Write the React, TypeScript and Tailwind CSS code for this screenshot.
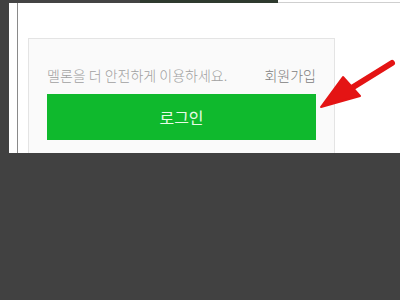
export default function App() {
  return (
    <div
      className="relative flex h-[300px] w-[400px] flex-col overflow-hidden bg-[#414141]"
      style={{ fontFamily: '"Noto Sans CJK KR", "Noto Sans", sans-serif' }}
    >
      <div className="ml-[9px] flex h-[153px] flex-col bg-white">
        {/* top strip from the page behind */}
        <div className="flex h-[3px] shrink-0">
          <div className="w-[131px] bg-[#444444]" />
          <div className="w-[138px] bg-[#2e3a2e]" />
          <div className="flex-1 border-b border-[#cfcfcf] bg-white" />
        </div>
        <div className="flex flex-1">
          <div className="w-[8px] shrink-0" />
          <div className="w-px shrink-0 bg-[#8a8a8a]" />
          <div className="flex flex-1 flex-col pl-[10px] pt-[35px]">
            <div className="flex w-[307px] flex-1 flex-col border border-b-0 border-[#e4e4e4] bg-[#fafafa] px-[18px] pt-[26px]">
              <div className="flex items-center justify-between text-[14px] leading-[20px] font-light">
                <span className="text-[#a0a0a0]">멜론을 더 안전하게 이용하세요.</span>
                <span className="text-[#808080]">회원가입</span>
              </div>
              <button className="mt-[9px] flex h-[46px] w-full items-center justify-center bg-[#0fb92d] text-[16px] text-[#e6fbe6]">
                로그인
              </button>
            </div>
          </div>
        </div>
      </div>

      {/* red annotation arrow */}
      <svg className="absolute left-0 top-0" width="400" height="300" viewBox="0 0 400 300">
        <line x1="392" y1="63" x2="350" y2="89" stroke="#e41414" strokeWidth="6" strokeLinecap="round" />
        <polygon points="321,107 343,77 360,96" fill="#e41414" stroke="#e41414" strokeWidth="2" strokeLinejoin="round" />
      </svg>
    </div>
  );
}
